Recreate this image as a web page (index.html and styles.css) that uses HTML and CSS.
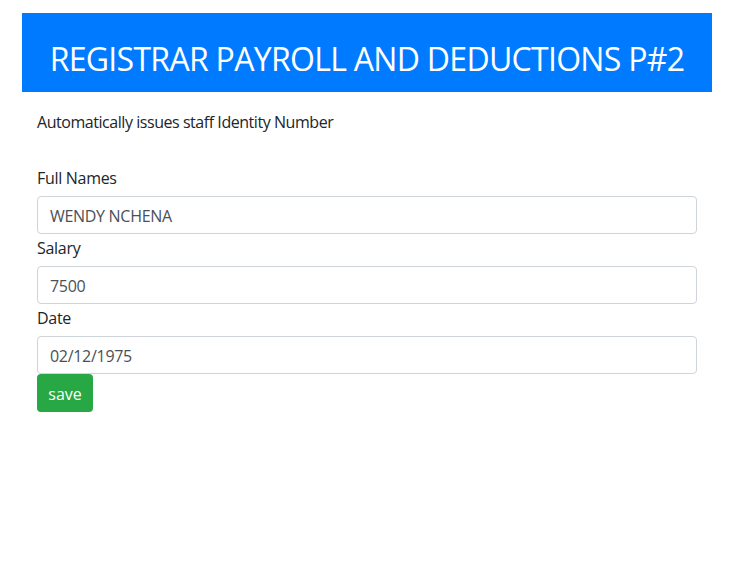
FILE: index.html
```html
<!DOCTYPE html>
<html>
<head>
<meta charset="utf-8">
<link rel="stylesheet" href="styles.css">
</head>
<body>
<div class="page">
  <div class="header"><h1 class="title">REGISTRAR PAYROLL AND DEDUCTIONS P#2</h1></div>
  <div class="content">
    <p class="intro">Automatically issues staff Identity Number</p>
    <form class="form">
      <label class="label">Full Names</label>
      <input class="input" type="text" value="WENDY NCHENA">
      <label class="label">Salary</label>
      <input class="input" type="text" value="7500">
      <label class="label">Date</label>
      <input class="input input-last" type="text" value="02/12/1975">
      <div><button class="btn" type="button">save</button></div>
    </form>
  </div>
</div>
</body>
</html>
```
FILE: styles.css
```css
html, body { margin: 0; padding: 0; background: #fff; }
body {
  font-family: "Open Sans", "Noto Sans", sans-serif;
  font-size: 16px;
  line-height: 24px;
  color: #212529;
}
.page { width: 690px; margin: 13px 0 0 22px; }
.header {
  box-sizing: border-box;
  background: #007bff;
  height: 79px;
  padding-top: 12px;
  display: flex;
  align-items: center;
  justify-content: center;
}
.title {
  margin: 0;
  color: #fff;
  font-weight: 400;
  font-size: 32px;
  line-height: 40px;
  letter-spacing: -0.7px;
}
.content { padding: 0 15px; }
.intro { margin: 18px 0 32px; letter-spacing: -0.45px; }
.form { display: flex; flex-direction: column; }
.label { display: block; margin-bottom: 6px; letter-spacing: -0.3px; }
.input {
  box-sizing: border-box;
  height: 38px;
  margin: 0 0 2px;
  padding: 7px 12px 5px;
  border: 1px solid #ced4da;
  border-radius: 4px;
  font-family: inherit;
  font-size: 16px;
  color: #495057;
  letter-spacing: -0.3px;
  outline: none;
}
.input-last { margin-bottom: 0; }
.btn {
  height: 38px;
  width: 56px;
  padding: 2px 0 0;
  border: 0;
  border-radius: 4px;
  background: #28a745;
  color: #fff;
  font-family: inherit;
  font-size: 16px;
}
```
